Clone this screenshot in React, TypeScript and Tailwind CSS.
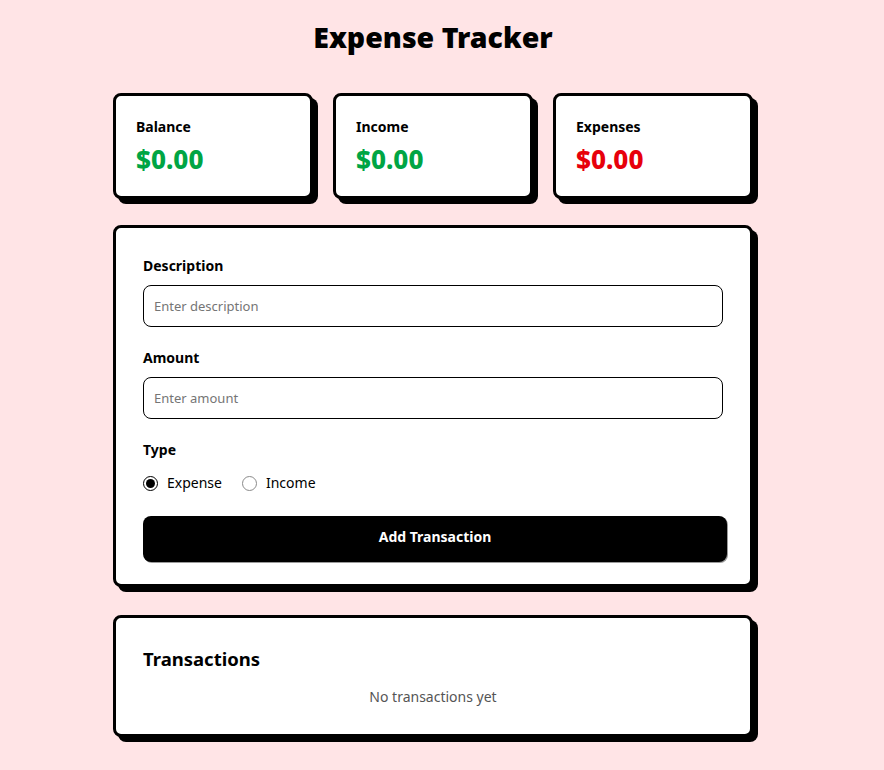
import { useState } from "react";

type TxType = "expense" | "income";

const font = { fontFamily: '"Noto Sans", "Open Sans", sans-serif' };

function StatCard({ label, value, tone }: { label: string; value: string; tone: "green" | "red" }) {
  return (
    <div className="rounded-lg border-[3px] border-black bg-white px-5 pt-5 pb-[21px] shadow-[5px_5px_0_#000]">
      <div className="mb-1.5 text-[14px] font-bold leading-[22px] text-black">{label}</div>
      <div
        className={[
          "text-[26px] font-extrabold leading-[31px]",
          tone === "green" ? "text-[#00a544]" : "text-[#e7000b]",
        ].join(" ")}
      >
        {value}
      </div>
    </div>
  );
}

function Radio({ checked, label, onSelect }: { checked: boolean; label: string; onSelect: () => void }) {
  return (
    <label className="flex cursor-pointer items-center gap-[9px]" onClick={onSelect}>
      <span
        className={[
          "flex size-[15px] items-center justify-center rounded-full bg-white",
          checked ? "border-[1.5px] border-black" : "border border-[#8a8a8a]",
        ].join(" ")}
      >
        {checked ? <span className="size-[9px] rounded-full bg-black" /> : null}
      </span>
      <span className="text-[14px] leading-[22px] text-black">{label}</span>
    </label>
  );
}

export default function App() {
  const [description, setDescription] = useState("");
  const [amount, setAmount] = useState("");
  const [type, setType] = useState<TxType>("expense");

  return (
    <div className="min-h-[770px] bg-[#ffe4e6] pr-[18px]" style={font}>
      <div className="mx-auto w-[640px] pt-[19px] pb-8">
        <h1 className="mb-[38px] text-center text-[28.5px] font-black leading-[36px] text-black">
          Expense Tracker
        </h1>

        <div className="mb-[26px] grid grid-cols-3 gap-5">
          <StatCard label="Balance" value="$0.00" tone="green" />
          <StatCard label="Income" value="$0.00" tone="green" />
          <StatCard label="Expenses" value="$0.00" tone="red" />
        </div>

        <div className="mb-7 rounded-lg border-[3px] border-black bg-white px-[27px] pt-[27px] pb-[22px] shadow-[5px_5px_0_#000]">
          <label className="mb-2 block text-[14px] font-bold leading-[22px] text-black">Description</label>
          <input
            type="text"
            value={description}
            onChange={(e) => setDescription(e.target.value)}
            placeholder="Enter description"
            className="mb-5 block h-[42px] w-full rounded-lg border border-black bg-white px-2.5 text-[13px] text-black outline-none placeholder:text-[#757575]"
          />

          <label className="mb-2 block text-[14px] font-bold leading-[22px] text-black">Amount</label>
          <input
            type="text"
            value={amount}
            onChange={(e) => setAmount(e.target.value)}
            placeholder="Enter amount"
            className="mb-5 block h-[42px] w-full rounded-lg border border-black bg-white px-2.5 text-[13px] text-black outline-none placeholder:text-[#757575]"
          />

          <div className="mb-[11px] text-[14px] font-bold leading-[22px] text-black">Type</div>
          <div className="mb-[22px] flex items-center gap-5">
            <Radio checked={type === "expense"} label="Expense" onSelect={() => setType("expense")} />
            <Radio checked={type === "income"} label="Income" onSelect={() => setType("income")} />
          </div>

          <button
            type="button"
            className="block h-[46px] w-[calc(100%+4px)] cursor-pointer rounded-lg bg-black pb-[5px] text-[14px] font-bold text-white shadow-[1px_1px_0_#9a9a9a]"
          >
            Add Transaction
          </button>
        </div>

        <div className="rounded-lg border-[3px] border-black bg-white px-[27px] pt-[30px] pb-[26px] shadow-[5px_5px_0_#000]">
          <h2 className="mb-4 text-[18.5px] font-bold leading-[22px] text-black">Transactions</h2>
          <p className="text-center text-[14px] leading-[22px] text-[#555]">No transactions yet</p>
        </div>
      </div>
    </div>
  );
}
